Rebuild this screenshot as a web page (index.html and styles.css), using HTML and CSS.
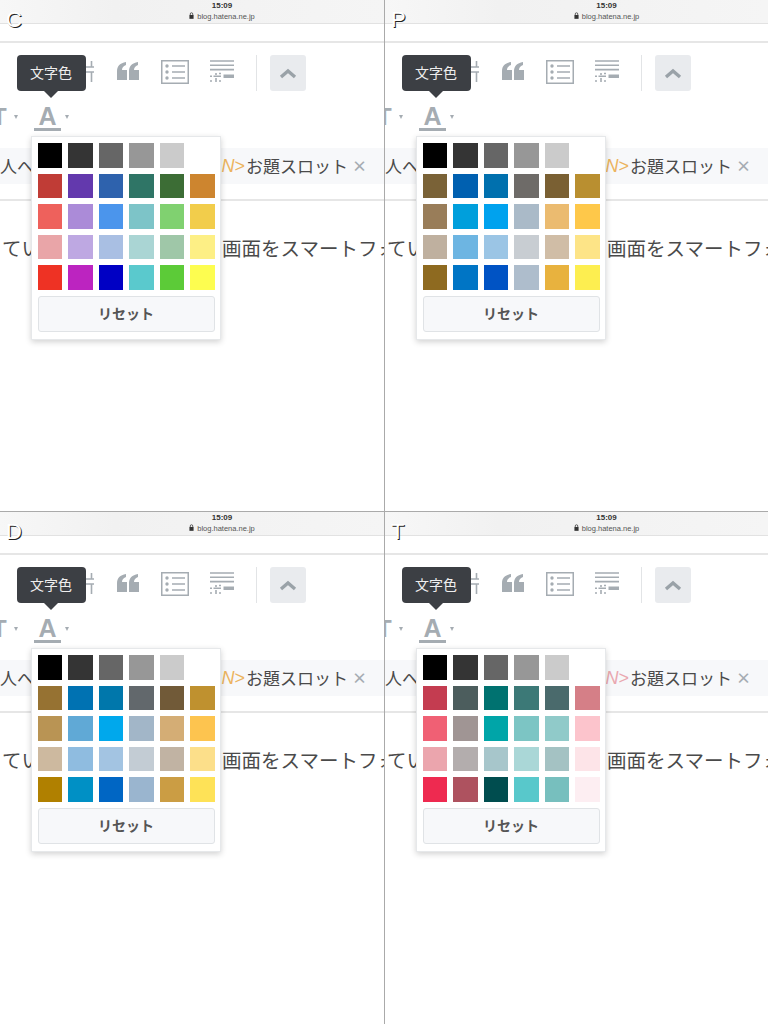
FILE: index.html
```html
<!DOCTYPE html>
<html lang="ja">
  <head>
    <title>文字色パレット</title>
    <meta charset="utf-8">
    <link rel="stylesheet" href="styles.css">
  </head>
  <body>

  <svg class="defs" width="0" height="0">
    <symbol id="i-table" viewBox="0 0 12 24">
      <path d="M0 7h12M0 12h12M9.500 1v6M9.500 12v10" fill="none" stroke="#a5acb2" stroke-width="1.600"/>
    </symbol>
    <symbol id="i-quote" viewBox="0 0 22 18">
      <path d="M0 18V9C0 4 3 1 9 0v3C6 4 5 6 5 8h5v10zM12 18V9c0-5 3-8 9-9v3c-3 1-4 3-4 5h5v10z" fill="#a5acb2"/>
    </symbol>
    <symbol id="i-list" viewBox="0 0 28 24">
      <path d="M.75.75h26.5v22.5H.75z" fill="none" stroke="#a5acb2" stroke-width="1.5"/>
      <path d="M11 6h13M11 12h13M11 18h13" fill="none" stroke="#a5acb2" stroke-width="1.6"/>
      <circle cx="6" cy="6" r="1.7" fill="#a5acb2"/>
      <circle cx="6" cy="12" r="1.7" fill="#a5acb2"/>
      <circle cx="6" cy="18" r="1.7" fill="#a5acb2"/>
    </symbol>
    <symbol id="i-more" viewBox="0 0 24 22">
      <path d="M0 1h24M0 5.300h24M0 9.600h24" fill="none" stroke="#a5acb2" stroke-width="1.600"/>
      <path d="M13.500 14.500H24V18H13.500z" fill="#a5acb2"/>
      <path d="M0 16.300h2M3.500 16.300h7.500M6 13v2M6 18v4M0 21h2M9 13.500h2M9 21h2" fill="none" stroke="#a5acb2" stroke-width="1.600"/>
    </symbol>
    <symbol id="i-up" viewBox="0 0 18 11">
      <path d="M2 9l7-6 7 6" fill="none" stroke="#9aa2a8" stroke-width="3.4"/>
    </symbol>
    <symbol id="i-lock" viewBox="0 0 6 8">
      <path d="M1.5 3.5V2.2a1.5 1.5 0 0 1 3 0v1.3" fill="none" stroke="#333" stroke-width=".9"/>
      <path d="M.5 3.4h5V8h-5z" fill="#333"/>
    </symbol>
  </svg>

  <div class="sheet">

    <section class="panel">
      <div class="stamp">C</div>
      <div class="status"><span class="time">15:09</span><span class="url"><svg class="lock"><use href="#i-lock"/></svg>blog.hatena.ne.jp</span></div>
      <div class="strip"></div>
      <div class="tools">
        <svg class="i-table"><use href="#i-table"/></svg>
        <svg class="i-quote"><use href="#i-quote"/></svg>
        <svg class="i-list"><use href="#i-list"/></svg>
        <svg class="i-more"><use href="#i-more"/></svg>
        <span class="sep"></span>
        <span class="up"><svg class="i-up"><use href="#i-up"/></svg></span>
      </div>
      <div class="tools2">
        <span class="t-btn">T</span><span class="caret"></span>
        <span class="a-btn">A</span><span class="caret"></span>
      </div>
      <div class="tags">
        <span>人へ</span>
        <span class="slot"><span class="mark"><em>N</em>&gt;</span>お題スロット<b class="close">×</b></span>
      </div>
      <div class="body-text"><span>てい</span><span class="right">画面をスマートフォン</span></div>
      <div class="tip">文字色</div>
      <div class="pop">
        <div class="grid">
          <i style="background:#000"></i><i style="background:#343434"></i><i style="background:#666"></i><i style="background:#979797"></i><i style="background:#cbcbcb"></i><i></i>
          <i style="background:#c03c36"></i><i style="background:#6339ad"></i><i style="background:#2e62ad"></i><i style="background:#2f7566"></i><i style="background:#3c6d35"></i><i style="background:#cd852f"></i>
          <i style="background:#ee615c"></i><i style="background:#ab8bd8"></i><i style="background:#4b95ec"></i><i style="background:#7dc4c8"></i><i style="background:#80d170"></i><i style="background:#f2cd4b"></i>
          <i style="background:#e9a5a8"></i><i style="background:#bea8e2"></i><i style="background:#a9bfe3"></i><i style="background:#aad5d4"></i><i style="background:#9fc7a8"></i><i style="background:#fdef85"></i>
          <i style="background:#ee3224"></i><i style="background:#bc24c0"></i><i style="background:#0000c4"></i><i style="background:#5ac9cd"></i><i style="background:#5ccb38"></i><i style="background:#fdfd50"></i>
        </div>
        <div class="reset">リセット</div>
      </div>
    </section>

    <section class="panel">
      <div class="stamp">P</div>
      <div class="status"><span class="time">15:09</span><span class="url"><svg class="lock"><use href="#i-lock"/></svg>blog.hatena.ne.jp</span></div>
      <div class="strip"></div>
      <div class="tools">
        <svg class="i-table"><use href="#i-table"/></svg>
        <svg class="i-quote"><use href="#i-quote"/></svg>
        <svg class="i-list"><use href="#i-list"/></svg>
        <svg class="i-more"><use href="#i-more"/></svg>
        <span class="sep"></span>
        <span class="up"><svg class="i-up"><use href="#i-up"/></svg></span>
      </div>
      <div class="tools2">
        <span class="t-btn">T</span><span class="caret"></span>
        <span class="a-btn">A</span><span class="caret"></span>
      </div>
      <div class="tags">
        <span>人へ</span>
        <span class="slot"><span class="mark"><em>N</em>&gt;</span>お題スロット<b class="close">×</b></span>
      </div>
      <div class="body-text"><span>てい</span><span class="right">画面をスマートフォン</span></div>
      <div class="tip">文字色</div>
      <div class="pop">
        <div class="grid">
          <i style="background:#000"></i><i style="background:#343434"></i><i style="background:#666"></i><i style="background:#979797"></i><i style="background:#cbcbcb"></i><i></i>
          <i style="background:#7a6237"></i><i style="background:#0060b0"></i><i style="background:#0070ae"></i><i style="background:#6e6b68"></i><i style="background:#7a6033"></i><i style="background:#b98f30"></i>
          <i style="background:#997d59"></i><i style="background:#009fdc"></i><i style="background:#00a2ee"></i><i style="background:#aabac8"></i><i style="background:#ebbb70"></i><i style="background:#fec84a"></i>
          <i style="background:#bfb09f"></i><i style="background:#6db5e2"></i><i style="background:#9bc5e5"></i><i style="background:#c8cdd2"></i><i style="background:#d0bda6"></i><i style="background:#fde487"></i>
          <i style="background:#8e6a20"></i><i style="background:#0075c5"></i><i style="background:#0053c4"></i><i style="background:#aebdcc"></i><i style="background:#e8b23e"></i><i style="background:#fdee50"></i>
        </div>
        <div class="reset">リセット</div>
      </div>
    </section>

    <section class="panel">
      <div class="stamp">D</div>
      <div class="status"><span class="time">15:09</span><span class="url"><svg class="lock"><use href="#i-lock"/></svg>blog.hatena.ne.jp</span></div>
      <div class="strip"></div>
      <div class="tools">
        <svg class="i-table"><use href="#i-table"/></svg>
        <svg class="i-quote"><use href="#i-quote"/></svg>
        <svg class="i-list"><use href="#i-list"/></svg>
        <svg class="i-more"><use href="#i-more"/></svg>
        <span class="sep"></span>
        <span class="up"><svg class="i-up"><use href="#i-up"/></svg></span>
      </div>
      <div class="tools2">
        <span class="t-btn">T</span><span class="caret"></span>
        <span class="a-btn">A</span><span class="caret"></span>
      </div>
      <div class="tags">
        <span>人へ</span>
        <span class="slot"><span class="mark"><em>N</em>&gt;</span>お題スロット<b class="close">×</b></span>
      </div>
      <div class="body-text"><span>てい</span><span class="right">画面をスマートフォン</span></div>
      <div class="tip">文字色</div>
      <div class="pop">
        <div class="grid">
          <i style="background:#000"></i><i style="background:#343434"></i><i style="background:#666"></i><i style="background:#979797"></i><i style="background:#cbcbcb"></i><i></i>
          <i style="background:#967232"></i><i style="background:#0072b2"></i><i style="background:#0077ab"></i><i style="background:#62686c"></i><i style="background:#715a38"></i><i style="background:#bf912f"></i>
          <i style="background:#b99454"></i><i style="background:#60a9d6"></i><i style="background:#00a8ec"></i><i style="background:#a2b6c8"></i><i style="background:#d4ad75"></i><i style="background:#fdc44f"></i>
          <i style="background:#cdb99f"></i><i style="background:#8fbce0"></i><i style="background:#a3c4e2"></i><i style="background:#c3ccd4"></i><i style="background:#c1b3a3"></i><i style="background:#fcdf8a"></i>
          <i style="background:#b08000"></i><i style="background:#0090c5"></i><i style="background:#0066c4"></i><i style="background:#9ab5cf"></i><i style="background:#cb9d44"></i><i style="background:#fee257"></i>
        </div>
        <div class="reset">リセット</div>
      </div>
    </section>

    <section class="panel">
      <div class="stamp">T</div>
      <div class="status"><span class="time">15:09</span><span class="url"><svg class="lock"><use href="#i-lock"/></svg>blog.hatena.ne.jp</span></div>
      <div class="strip"></div>
      <div class="tools">
        <svg class="i-table"><use href="#i-table"/></svg>
        <svg class="i-quote"><use href="#i-quote"/></svg>
        <svg class="i-list"><use href="#i-list"/></svg>
        <svg class="i-more"><use href="#i-more"/></svg>
        <span class="sep"></span>
        <span class="up"><svg class="i-up"><use href="#i-up"/></svg></span>
      </div>
      <div class="tools2">
        <span class="t-btn">T</span><span class="caret"></span>
        <span class="a-btn">A</span><span class="caret"></span>
      </div>
      <div class="tags">
        <span>人へ</span>
        <span class="slot"><span class="mark pink"><em>N</em>&gt;</span>お題スロット<b class="close">×</b></span>
      </div>
      <div class="body-text"><span>てい</span><span class="right">画面をスマートフォン</span></div>
      <div class="tip">文字色</div>
      <div class="pop">
        <div class="grid">
          <i style="background:#000"></i><i style="background:#343434"></i><i style="background:#666"></i><i style="background:#979797"></i><i style="background:#cbcbcb"></i><i></i>
          <i style="background:#c43c50"></i><i style="background:#4c5d5d"></i><i style="background:#007270"></i><i style="background:#3c7977"></i><i style="background:#4a6a6c"></i><i style="background:#d57f87"></i>
          <i style="background:#f06074"></i><i style="background:#a09594"></i><i style="background:#00a5a8"></i><i style="background:#7cc5c4"></i><i style="background:#90cac9"></i><i style="background:#fcc4cc"></i>
          <i style="background:#eba5ad"></i><i style="background:#b3adad"></i><i style="background:#a7c6cb"></i><i style="background:#aad7d7"></i><i style="background:#a4c2c3"></i><i style="background:#fde4e8"></i>
          <i style="background:#ee2a50"></i><i style="background:#ae525f"></i><i style="background:#004d4f"></i><i style="background:#58c8cb"></i><i style="background:#77bfbe"></i><i style="background:#fdeef2"></i>
        </div>
        <div class="reset">リセット</div>
      </div>
    </section>

  </div>

  </body>
</html>
```

FILE: styles.css
```css
html {
  height: 100%;
}
body {
  margin: 0;
  background: #fff;
  color: #444;
  font-family: "Noto Sans CJK JP", "Noto Sans", sans-serif;
  height: 100%;
}

.defs {
  position: absolute;
}

.sheet {
  display: grid;
  grid-template-columns: 384px 384px;
  grid-template-rows: 512px 512px;
  height: 1024px;
  overflow: hidden;
}

.panel {
  position: relative;
  overflow: hidden;
}
.panel:nth-child(even) {
  border-left: 1px solid #aaa;
}
.panel:nth-child(-n+2) {
  border-bottom: 1px solid #aaa;
}

.stamp {
  position: absolute;
  left: 6px;
  top: 5px;
  font: 22px/30px "Liberation Sans", sans-serif;
  color: #fff;
  text-shadow: 1px 1px 0 #222;
}

.status {
  height: 23px;
  padding-left: 60px;
  background: linear-gradient(90deg, #f7f7f7, #f1f1f1 30%, #f5f5f5);
  border-bottom: 1px solid #e2e2e2;
  display: flex;
  flex-direction: column;
  align-items: center;
  font-family: "Liberation Sans", sans-serif;
  color: #333;
}
.time {
  font-size: 8px;
  line-height: 12px;
  font-weight: bold;
}
.url {
  font-size: 7.5px;
  line-height: 10px;
  color: #555;
}
.lock {
  width: 5px;
  height: 7px;
  margin-right: 3px;
}

.strip {
  height: 17px;
  border-bottom: 2px solid #e6e6e6;
}

.tools {
  height: 36px;
  margin-top: 12px;
  display: flex;
  align-items: flex-start;
}
.tools svg {
  flex: none;
}
.i-table {
  width: 12px;
  height: 24px;
  margin: 5px 0 0 82px;
}
.i-quote {
  width: 22px;
  height: 18px;
  margin: 7px 0 0 23px;
}
.i-list {
  width: 28px;
  height: 24px;
  margin: 5px 0 0 22px;
}
.i-more {
  width: 24px;
  height: 22px;
  margin: 5px 0 0 21px;
}
.sep {
  width: 1px;
  height: 36px;
  background: #e2e4e6;
  margin-left: 22px;
}
.up {
  width: 36px;
  height: 36px;
  margin-left: 13px;
  background: #e9ebee;
  border-radius: 3px;
  display: flex;
  align-items: center;
  justify-content: center;
}
.i-up {
  width: 18px;
  height: 11px;
}

.tools2 {
  height: 30px;
  margin-top: 11px;
  display: flex;
  align-items: center;
  font-family: "Liberation Sans", sans-serif;
  font-weight: bold;
  color: #a5acb2;
}
.t-btn {
  width: 16px;
  margin-left: -8px;
  font-size: 24px;
  line-height: 30px;
}
.a-btn {
  width: 27px;
  margin-left: 16px;
  border-bottom: 3px solid #a5acb2;
  font-size: 25px;
  line-height: 24px;
  text-align: center;
}
.caret {
  width: 0;
  height: 0;
  margin-left: 6px;
  border-left: 2.5px solid transparent;
  border-right: 2.5px solid transparent;
  border-top: 4px solid #a5acb2;
}
.a-btn + .caret {
  margin-left: 4px;
}

.tags {
  height: 36px;
  margin-top: 16px;
  padding-right: 17px;
  background: #f7f8fa;
  display: flex;
  align-items: center;
  justify-content: space-between;
  font-size: 17px;
  line-height: 36px;
  color: #4a4a4a;
}
.slot {
  display: flex;
  align-items: center;
}
.mark {
  color: #ecb45f;
  font-family: "Liberation Sans", sans-serif;
  font-size: 18px;
  margin-right: 1px;
}
.mark.pink {
  color: #eaa8b0;
}
.close {
  color: #a5acb2;
  margin-left: 4px;
  font-size: 15px;
  font-weight: bold;
}

.body-text {
  margin-top: 15px;
  border-top: 2px solid #e6e6e6;
  padding-top: 32px;
  display: flex;
  overflow: hidden;
  white-space: nowrap;
  font-size: 19.5px;
  line-height: 30px;
  color: #4a4a4a;
}
.body-text span:first-child {
  flex: none;
  margin-left: 2px;
}
.right {
  margin-left: 181px;
  min-width: 0;
  overflow: hidden;
}

.tip {
  position: absolute;
  left: 17px;
  top: 55px;
  width: 68px;
  padding-right: 1px;
  height: 36px;
  background: #3c3f44;
  border-radius: 4px;
  color: #eee;
  font-size: 14px;
  line-height: 35px;
  text-align: center;
}
.tip:after {
  content: "";
  position: absolute;
  left: 27px;
  top: 36px;
  border-left: 7px solid transparent;
  border-right: 7px solid transparent;
  border-top: 7px solid #3c3f44;
}

.pop {
  position: absolute;
  left: 31px;
  top: 136px;
  width: 190px;
  height: 204px;
  box-sizing: border-box;
  padding: 6px 5.5px;
  background: #fff;
  border: 1px solid #e6e8ea;
  box-shadow: 0 2px 6px rgba(0,0,0,0.18);
}
.grid {
  display: grid;
  grid-template-columns: repeat(6, 24.5px);
  grid-auto-rows: 24.5px;
  gap: 6px;
}
.reset {
  margin-top: 6px;
  height: 36px;
  box-sizing: border-box;
  background: #f7f8fa;
  border: 1px solid #e0e3e6;
  border-radius: 3px;
  font-size: 14px;
  font-weight: bold;
  line-height: 33px;
  text-align: center;
  color: #555;
}
```
